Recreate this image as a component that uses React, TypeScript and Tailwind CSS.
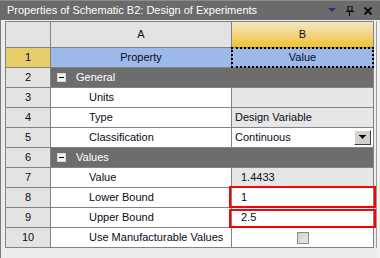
import React from "react";

const font = { fontFamily: "'Liberation Sans', Arial, sans-serif" };

function Minus() {
  return (
    <span className="inline-flex w-[9px] h-[9px] border border-[#d8d8d8] bg-[#f0f0f0] items-center justify-center mr-[10px]">
      <span className="block w-[5px] h-px bg-black" />
    </span>
  );
}

function Num({ n }: { n: number }) {
  return <div className="bg-[#e3e3e3] flex items-center justify-center text-[#0a0a1a]">{n}</div>;
}

function Group({ n, label }: { n: number; label: string }) {
  return (
    <>
      <Num n={n} />
      <div className="col-span-2 bg-[#6d6d6d] text-white flex items-center pl-[6px]">
        <Minus />
        {label}
      </div>
    </>
  );
}

function Prop({ label }: { label: string }) {
  return <div className="bg-white flex items-center pl-[38px] text-[#0a0a1a] whitespace-nowrap overflow-hidden">{label}</div>;
}

export default function App() {
  return (
    <div className="w-[380px] h-[258px] bg-[#ececec] flex flex-col overflow-hidden text-[11px] leading-none" style={font}>
      <div className="h-[20px] bg-[#6b6b6b] flex items-center text-white pl-[7px] pr-[8px] border-t border-[#8a8a8a]">
        <span className="flex-1 text-[11px]">Properties of Schematic B2: Design of Experiments</span>
        <svg width="8" height="5" viewBox="0 0 8 5" className="mr-[10px]">
          <polygon points="0,0 8,0 4,4" fill="#2c2c8c" />
        </svg>
        <svg width="8" height="10" viewBox="0 0 8 10" className="mr-[10px]">
          <rect x="2" y="0" width="4" height="5" fill="none" stroke="#000" strokeWidth="1" />
          <rect x="0" y="5" width="8" height="1" fill="#000" />
          <rect x="3" y="6" width="1" height="4" fill="#000" />
        </svg>
        <svg width="8" height="8" viewBox="0 0 8 8">
          <path d="M0.5 0.5 L7.5 7.5 M7.5 0.5 L0.5 7.5" stroke="#000" strokeWidth="1.8" />
        </svg>
      </div>
      <div className="flex-1 flex border-l border-[#7a7a7a]">
        <div className="pl-[4px] pt-[1px]">
          <div className="grid grid-cols-[44px_180px_141px] grid-rows-[25px_repeat(10,19px)] gap-px bg-[#828282] border border-[#828282]">
            <div className="bg-[#e3e3e3]" />
            <div className="bg-[#e3e3e3] flex items-center justify-center text-[#0a0a1a]">A</div>
            <div className="bg-gradient-to-b from-[#f3e8c0] to-[#f0c01c] flex items-center justify-center text-[#0a0a1a]">B</div>

            <div className="bg-[#e8cc6a] flex items-center justify-center text-[#0a0a1a]">1</div>
            <div className="bg-[#9cb9ea] flex items-center justify-center text-[#0a0a1a]">Property</div>
            <div className="relative bg-[#9cb9ea] flex items-center justify-center text-[#0a0a1a]">
              <div className="absolute -left-[1px] -right-[1px] -top-[1px] -bottom-[1px] border-2 border-dotted border-black" />
              Value
            </div>

            <Group n={2} label="General" />

            <Num n={3} />
            <Prop label="Units" />
            <div className="bg-[#e6e6e6]" />

            <Num n={4} />
            <Prop label="Type" />
            <div className="bg-[#e6e6e6] flex items-center pl-[3px] text-[#0a0a1a]">Design Variable</div>

            <Num n={5} />
            <Prop label="Classification" />
            <div className="bg-white flex items-center pl-[3px] pr-[2px] text-[#0a0a1a]">
              <span className="flex-1">Continuous</span>
              <span className="w-[17px] h-[15px] bg-[#d4d0c8] border border-t-white border-l-white border-r-[#404040] border-b-[#404040] flex items-center justify-center">
                <svg width="7" height="5" viewBox="0 0 7 5">
                  <polygon points="0,0 7,0 3.5,4" fill="#000" />
                  <rect x="0" y="0" width="7" height="1" fill="#000" />
                </svg>
              </span>
            </div>

            <Group n={6} label="Values" />

            <Num n={7} />
            <Prop label="Value" />
            <div className="bg-[#e6e6e6] flex items-center pl-[9px] text-[#0a0a1a]">1.4433</div>

            <Num n={8} />
            <Prop label="Lower Bound" />
            <div className="relative bg-white flex items-center pl-[9px] text-[#0a0a1a]">
              <div className="absolute -left-[3px] -right-[3px] -top-[2px] -bottom-[1px] border-2 border-[#ff0000]" />
              1
            </div>

            <Num n={9} />
            <Prop label="Upper Bound" />
            <div className="relative bg-white flex items-center pl-[9px] text-[#0a0a1a]">
              <div className="absolute -left-[3px] -right-[3px] top-[1px] -bottom-[1px] border-2 border-[#ff0000]" />
              2.5
            </div>

            <Num n={10} />
            <Prop label="Use Manufacturable Values" />
            <div className="bg-white flex items-center justify-center">
              <span className="w-[12px] h-[12px] border border-[#8a8a8a] bg-gradient-to-br from-[#c8c8c8] to-[#f4f4f4] p-[1px]">
                <span className="block w-full h-full border border-[#d8d8d8]" />
              </span>
            </div>
          </div>
        </div>
        <div className="w-[2px]" />
        <div className="w-px bg-[#9a9a9a] h-[227px] mt-[1px]" />
        <div className="flex-1 bg-[#f2f2f2]" />
      </div>
    </div>
  );
}
